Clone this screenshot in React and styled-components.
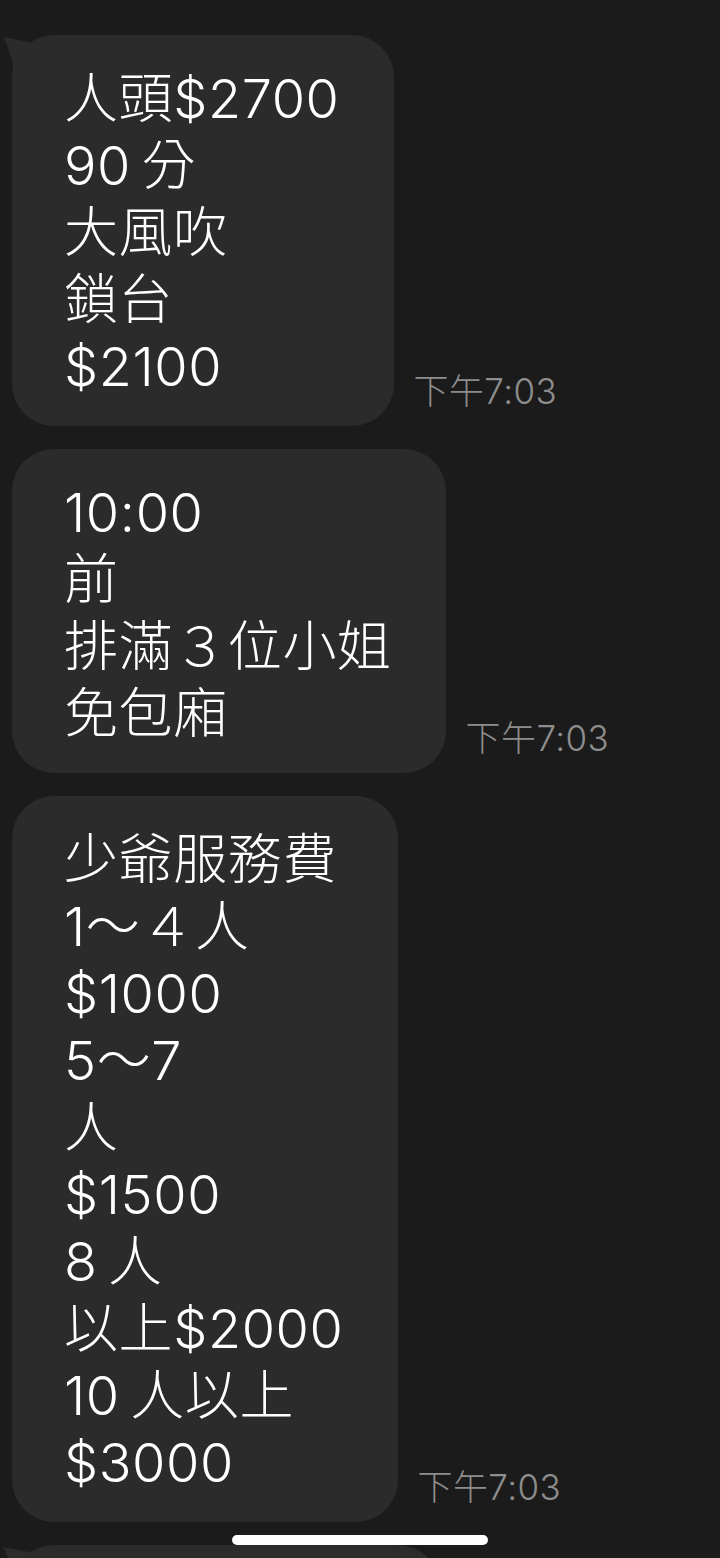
import React from 'react';
import styled, { createGlobalStyle } from 'styled-components';

const Global = createGlobalStyle`
  html, body {
    margin: 0;
    padding: 0;
    background: #1b1b1b;
    height: 1558px;
    overflow: hidden;
  }
  * { box-sizing: border-box; }
`;

/* ── SCREEN ── */
const Screen = styled.div`
  position: relative;
  width: 720px;
  height: 1558px;
  overflow: hidden;
  background: #1b1b1b;
  padding: 35px 0 0 12px;
  display: flex;
  flex-direction: column;
  gap: 23px;
  font-family: "Inter", "Noto Sans CJK TC", sans-serif;
  font-weight: 300;
`;

const Row = styled.div`
  display: flex;
  align-items: flex-end;
  gap: 20px;
`;

const Bubble = styled.div`
  position: relative;
  background: #2b2b2b;
  border-radius: 42px;
  padding: 30px 54px 26px 52px;
  min-width: ${({ $minW }) => $minW || 0}px;
  color: #fff;
  font-size: 54px;
  line-height: 67px;
  letter-spacing: 0.6px;
  flex-shrink: 0;
`;

const Line = styled.div`
  white-space: pre;
`;

const Tail = styled.svg`
  position: absolute;
  left: -9px;
  top: 2px;
  width: 44px;
  height: 36px;
`;

const Time = styled.div`
  color: #8d8d8d;
  font-size: 35px;
  line-height: 40px;
  margin-bottom: 15px;
  white-space: nowrap;
  letter-spacing: 0.4px;
`;

const HomeBar = styled.div`
  position: absolute;
  left: 232px;
  top: 1535px;
  width: 256px;
  height: 10px;
  border-radius: 5px;
  background: #fff;
`;

const THIN = '\u2009';

const MESSAGES = [
  { lines: ['人頭$2700', `90${THIN}分`, '大風吹', '鎖台', '$2100'], tail: true },
  { lines: ['10:00', '前', '排滿３位小姐', '免包廂'] },
  { lines: ['少爺服務費', '1～４人', '$1000', '5～7', '人', '$1500', `8${THIN}人`, '以上$2000', `10${THIN}人以上`, '$3000'] },
];

function BubbleTail() {
  return (
    <Tail viewBox="0 0 44 36">
      <path d="M0 0 Q20 4 42 8 L42 34 L11 34 Q8 14 0 0 Z" fill="#2b2b2b" />
    </Tail>
  );
}

export default function App() {
  return (
    <>
      <Global />
      <Screen>
        {MESSAGES.map((m, i) => (
          <Row key={i}>
            <Bubble>
              {m.tail && <BubbleTail />}
              {m.lines.map((l, j) => <Line key={j}>{l}</Line>)}
            </Bubble>
            <Time>下午7:03</Time>
          </Row>
        ))}
        <Row>
          <Bubble $minW={428}>
            <BubbleTail />
            <Line>&nbsp;</Line>
          </Bubble>
        </Row>
        <HomeBar />
      </Screen>
    </>
  );
}
